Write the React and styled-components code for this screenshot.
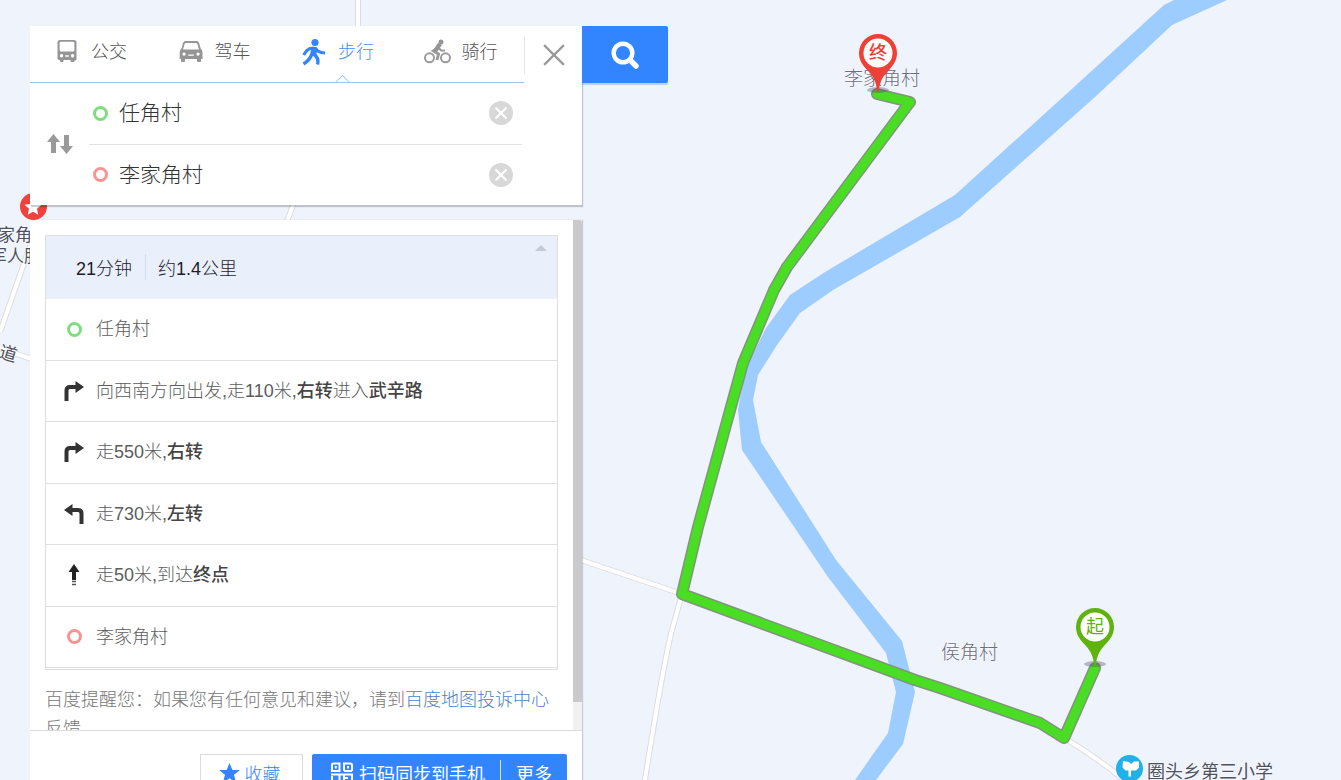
import React, { useState } from "react";
import styled, { createGlobalStyle, css } from "styled-components";

const GlobalStyle = createGlobalStyle`
  *, *::before, *::after { box-sizing: border-box; }
  body {
    margin: 0;
    background: #eff3fb;
    font-family: "Liberation Sans", "Noto Sans CJK SC", sans-serif;
    font-weight: 300;
    color: #555;
  }
  button, input {
    font: inherit;
    color: inherit;
    border: 0;
    padding: 0;
    margin: 0;
    background: none;
  }
  button { cursor: pointer; }
`;

const Page = styled.main`
  position: relative;
  height: 100vh;
  overflow: hidden;
  padding: 26px 30px 0;
  display: flex;
  flex-direction: column;
  gap: 15px;
`;

/* ---- map canvas ---- */

const MapLayer = styled.div`
  position: absolute;
  inset: 0;
  overflow: hidden;
  background: #eff3fb;
`;

const MapDrawing = styled.svg`
  display: block;
  width: 100%;
  height: 100%;
`;

const MapLabel = styled.span`
  position: absolute;
  left: ${(p) => p.$x}px;
  top: ${(p) => p.$y}px;
  font-size: ${(p) => p.$size || 19}px;
  font-weight: ${(p) => p.$weight || 300};
  line-height: 20px;
  white-space: nowrap;
  color: ${(p) => p.$color || "#686d80"};
  text-shadow: 0 0 2px #fff, 0 0 2px #fff;
  ${(p) => p.$turn && css`transform: rotate(${p.$turn}deg);`}
`;

const Pin = styled.div`
  position: absolute;
  left: ${(p) => p.$x}px;
  top: ${(p) => p.$y}px;
  width: 46px;
  height: 62px;
  svg { position: absolute; inset: 0; }
`;

const PinText = styled.span`
  position: relative;
  display: block;
  padding-top: 10px;
  text-align: center;
  font-size: 18px;
  line-height: 20px;
  font-weight: ${(p) => (p.$bold ? 500 : 400)};
  color: ${(p) => p.$color};
`;

/* ---- search card ---- */

const TopBar = styled.div`
  position: relative;
  display: flex;
  align-items: flex-start;
`;

const SearchCard = styled.form`
  width: 552px;
  background: #fff;
  box-shadow: 1px 2px 1px rgba(0, 0, 0, 0.2);
`;

const TabBar = styled.div`
  display: flex;
  height: 57px;
`;

const Tabs = styled.nav`
  flex: 1;
  display: grid;
  grid-template-columns: repeat(4, 1fr);
  border-bottom: 1px solid #a3c0dc;
`;

const Tab = styled.button`
  position: relative;
  display: flex;
  align-items: center;
  gap: 10px;
  padding: 0 0 4px 23px;
  font-size: 18px;
  line-height: 24px;
  color: ${(p) => (p.$active ? "#4a8fe0" : "#555")};
  svg { flex: none; }
`;

const TabNotch = styled.span`
  position: absolute;
  left: 60px;
  bottom: -6px;
  width: 11px;
  height: 11px;
  background: #fff;
  border: solid #a3c8e8;
  border-width: 1px 0 0 1px;
  transform: rotate(45deg);
  clip-path: polygon(-20% -20%, 110% -20%, -20% 110%);
`;

const CloseButton = styled.button`
  width: 58px;
  height: 38px;
  margin-top: 10px;
  border-left: 1px solid #e6e6e6;
  display: grid;
  place-items: center;
`;

const Fields = styled.div`
  display: flex;
`;

const SwapButton = styled.button`
  width: 59px;
  display: grid;
  place-items: center;
`;

const FieldList = styled.div`
  width: 433px;
`;

const Field = styled.div`
  display: flex;
  align-items: center;
  gap: 11px;
  height: 61px;
  padding: 0 8px 1px 4px;
  & + & { border-top: 1px solid #e3e3e3; }
`;

const Ring = styled.span`
  flex: none;
  width: 15px;
  height: 15px;
  border-radius: 50%;
  border: 3px solid ${(p) => (p.$end ? "#fb9393" : "#7fdd80")};
`;

const FieldInput = styled.input`
  flex: 1;
  min-width: 0;
  height: 40px;
  padding-bottom: 4px;
  font-size: 21px;
  color: #333;
  outline: 0;
`;

const ClearButton = styled.button`
  display: grid;
  place-items: center;
  width: 26px;
  height: 26px;
`;

const SearchButton = styled.button`
  width: 86px;
  height: 57px;
  display: grid;
  place-items: center;
  background: #3385ff;
  border-radius: 0 2px 2px 0;
  box-shadow: 0 2px 1px rgba(0, 60, 130, 0.2);
`;

/* ---- results ---- */

const Results = styled.section`
  position: relative;
  flex: 1;
  min-height: 0;
  width: 552px;
  display: flex;
  flex-direction: column;
  background: #fff;
  box-shadow: 1px 0 1px rgba(0, 0, 0, 0.16);
`;

const ScrollArea = styled.div`
  flex: 1;
  min-height: 0;
  display: flex;
`;

const ScrollContent = styled.div`
  flex: 1;
  overflow: hidden;
  padding: 15px 15px 0;
`;

const ScrollTrack = styled.div`
  width: 9px;
  background: #f1f1f2;
`;

const ScrollThumb = styled.div`
  height: calc(100% - 28px);
  background: #cacacc;
  border-top-right-radius: 3px;
`;

const RouteBox = styled.div`
  border: 1px solid #dfdfdf;
`;

const Summary = styled.div`
  display: flex;
  align-items: center;
  height: 63px;
  padding: 0 10px 2px 30px;
  background: #eaf0fb;
  font-size: 18px;
  color: #1c1c2c;
`;

const Distance = styled.span`
  flex: 1;
  margin-left: 13px;
  padding-left: 12px;
  border-left: 1px solid #d5dceb;
`;

const Collapse = styled.button`
  align-self: flex-start;
  margin-top: 9px;
  width: 12px;
  height: 6px;
  background: #c6cad6;
  clip-path: polygon(50% 0, 100% 100%, 0 100%);
`;

const Steps = styled.ol`
  list-style: none;
  margin: 0 0 1px;
  padding: 0;
  display: grid;
  grid-template-rows: repeat(6, 1fr);
  height: 369px;
`;

const Step = styled.li`
  display: grid;
  grid-template-columns: 34px 1fr;
  align-items: center;
  padding-left: 16px;
  border-bottom: 1px solid #dfdfdf;
  font-size: 18px;
  line-height: 24px;
  color: #5c5c5c;
  b { font-weight: 500; color: #444; }
`;

const StepIcon = styled.span`
  display: grid;
  place-items: center;
  width: 24px;
`;

const Notice = styled.p`
  margin: 16px 0 0;
  font-size: 18px;
  line-height: 29px;
  color: #777;
  a { color: #4c7fc4; text-decoration: none; }
`;

const Footer = styled.footer`
  flex: 0 0 50px;
  min-height: 0;
  height: 50px;
  display: flex;
  align-items: flex-start;
  justify-content: flex-end;
  gap: 9px;
  padding: 23px 15px 0;
  border-top: 1px solid #dcdcdc;
  font-size: 18px;
`;

const FavButton = styled.button`
  display: flex;
  align-items: center;
  justify-content: center;
  gap: 5px;
  flex: none;
  width: 103px;
  height: 38px;
  padding-right: 4px;
  border: 1px solid #dcdcdc;
  color: #3385ff;
`;

const ShareGroup = styled.div`
  display: flex;
  align-items: center;
  flex: none;
  width: 255px;
  height: 38px;
  background: #3385ff;
  border-radius: 2px;
  color: #fff;
`;

const ShareButton = styled.button`
  display: flex;
  align-items: center;
  gap: 5px;
  height: 26px;
  padding: 0 15px 0 18px;
  font-weight: 400;
  white-space: nowrap;
  border-right: 1px solid #d0e2ff;
`;

const MoreButton = styled.button`
  flex: 1;
  height: 38px;
  font-weight: 400;
`;

/* ---- icons ---- */

const BusIcon = () => (
  <svg width="28" height="26" viewBox="0 0 28 26" aria-hidden="true">
    <path fill="#959595" fillRule="evenodd" d="M7 1h14q2.500 0 2.500 2.500V20q0 1.500-1.500 1.500h-.5V22q0 1-1 1h-2q-1 0-1-1v-1h-7v1q0 1-1 1H8q-1 0-1-1v-1q-2.500 0-2.500-1.500V3.500Q4.500 1 7 1zM8 2.800Q6.600 2.800 6.600 4v7q0 1.500 1.400 1.500h12q1.400 0 1.400-1.500V4q0-1.200-1.400-1.200zM8.500 15a1.700 1.700 0 1 0 .1 0zm3.800 1.300v1.500h3.500v-1.500zM19.500 15a1.700 1.700 0 1 0 .1 0z" />
  </svg>
);

const CarIcon = () => (
  <svg width="28" height="26" viewBox="0 0 28 26" aria-hidden="true">
    <path fill="#959595" fillRule="evenodd" d="M8.500 2h11q2 0 2.600 2l1.600 5.500q1.800 1.600 1.800 3.500V20h-1.500v2q0 1-1 1h-2q-1 0-1-1v-2H8v2q0 1-1 1H5q-1 0-1-1v-2H2.700v-7q0-2 1.800-3.500L6 4q.6-2 2.500-2zm.2 2Q7.900 4 7.600 5L6 10.500h16L20.400 5q-.3-1-1.100-1zM7 13.500a1.600 1.600 0 1 0 .1 0zm4.200 2v1.300h5.600v-1.300zM21 13.500a1.600 1.600 0 1 0 .1 0z" />
  </svg>
);

const WalkIcon = () => (
  <svg width="28" height="28" viewBox="0 0 28 28" aria-hidden="true">
    <g fill="none" stroke="#3385ff" strokeWidth="3">
      <path d="M14 10 L10 10.500 Q7 11.500 3.600 17" />
      <path d="M15.500 10 Q17 14.500 25 15" />
      <path d="M11.800 16 Q10 22 3.500 26" strokeWidth="3.400" />
      <path d="M13.500 16 Q19.500 20 17.500 26.500" strokeWidth="3.400" />
    </g>
    <path fill="#3385ff" d="M10 9h6.500l1 2-1.500 7-6-.5 1-6z" />
    <circle cx="15" cy="4.500" r="3.600" fill="#3385ff" />
  </svg>
);

const BikeIcon = () => (
  <svg width="28" height="26" viewBox="0 0 28 26" aria-hidden="true">
    <g fill="none" stroke="#9b9b9b" strokeWidth="2">
      <circle cx="5.500" cy="18.800" r="4.500" />
      <circle cx="21.500" cy="18.800" r="4.500" />
      <path d="M14 9 L9.500 12 L14.500 15 L13 21" strokeWidth="3" />
      <path d="M14 8 L17 11.500 H21" />
    </g>
    <path fill="#959595" d="M8.500 12l5.500-8 4 2-5 7z" />
    <circle cx="17" cy="3" r="2.500" fill="#959595" />
  </svg>
);

const CrossIcon = ({ size, color, weight }) => (
  <svg width={size} height={size} viewBox="0 0 20 20" aria-hidden="true">
    <path d="M1 1l18 18M19 1L1 19" stroke={color} strokeWidth={weight} />
  </svg>
);

const ClearIcon = () => (
  <svg width="24" height="24" viewBox="0 0 24 24" aria-hidden="true">
    <circle cx="12" cy="12" r="12" fill="#d8d8d8" />
    <path d="M6.500 6.500l11 11M17.500 6.500l-11 11" stroke="#fff" strokeWidth="2.200" />
  </svg>
);

const SwapIcon = () => (
  <svg width="26" height="22" viewBox="0 0 26 22" aria-hidden="true">
    <path fill="#999" d="M6.500 1L13 9H9v11H4V9H0zM17 2h5v11h4l-6.500 8L13 13h4z" />
  </svg>
);

const SearchIcon = () => (
  <svg width="30" height="30" viewBox="0 0 30 30" aria-hidden="true">
    <circle cx="13" cy="13" r="9.300" fill="none" stroke="#fff" strokeWidth="4.400" />
    <path d="M20 20l6 6" stroke="#fff" strokeWidth="5.500" strokeLinecap="round" />
  </svg>
);

const TurnIcon = ({ left }) => (
  <svg width="22" height="22" viewBox="0 0 22 22" aria-hidden="true">
    <g transform={left ? "translate(22 0) scale(-1 1)" : undefined}>
      <path d="M3.500 21V10.500Q3.500 7 7 7H14" fill="none" stroke="#333" strokeWidth="4" />
      <path d="M12.500 1l8.500 6-8.500 6z" fill="#333" />
    </g>
  </svg>
);

const StraightIcon = () => (
  <svg width="12" height="24" viewBox="0 0 12 24" aria-hidden="true">
    <path d="M6 1l5.500 8H8v8H4V9H.5z" fill="#222" />
    <path d="M4 18.500h4M4 21.500h4" stroke="#555" strokeWidth="1.500" />
  </svg>
);

const StarIcon = () => (
  <svg width="21" height="20" viewBox="0 0 21 20" aria-hidden="true">
    <path fill="#3385ff" d="M10.500 0l2.900 7H21l-6 4.800L17.200 20l-6.700-4.700L3.800 20 6 11.800 0 7h7.600z" />
  </svg>
);

const CodeIcon = () => (
  <svg width="24" height="22" viewBox="0 0 24 22" fill="none" stroke="#fff" strokeWidth="2" aria-hidden="true">
    <path d="M2 9V3q0-1.500 1.500-1.500h6V9zM14 9V1.500h6.500Q22 1.500 22 3v6M1 12.500h22M2 14v5q0 1.500 1.500 1.500h6V12M14 12v9M14 16h4M22 12v9" />
    <path d="M14 9h8M5.800 4v2.500M18 4v2.500" />
  </svg>
);

/* ---- data ---- */

const MODES = [
  { id: "bus", label: "公交", icon: <BusIcon /> },
  { id: "car", label: "驾车", icon: <CarIcon /> },
  { id: "walk", label: "步行", icon: <WalkIcon /> },
  { id: "bike", label: "骑行", icon: <BikeIcon /> },
];

const STEPS = [
  { icon: <Ring />, text: "任角村" },
  { icon: <TurnIcon />, text: <>向西南方向出发,走110米,<b>右转</b>进入<b>武辛路</b></> },
  { icon: <TurnIcon />, text: <>走550米,<b>右转</b></> },
  { icon: <TurnIcon left />, text: <>走730米,<b>左转</b></> },
  { icon: <StraightIcon />, text: <>走50米,到达<b>终点</b></> },
  { icon: <Ring $end />, text: "李家角村" },
];

const ROADS = [
  "M358 0V26Q358 90 295 200L280 240",
  "M30 246L0 332",
  "M0 348L40 362",
  "M560 553L682 594",
  "M682 594L672 630Q664 660 644 786",
  "M1064 738Q1090 753 1122 778",
];

const RIVER =
  "M1174 0L1164 5L1085 77L955 195L825 272L790 295L766 328L745 370L738 410L742 450L828 577L886 653L896 692L888 733L855 780H876L903 744L915 692L902 641L836 560L761 442L753 400L758 375L777 345L800 313L833 290L960 217L1095 97L1172 25L1227 0Z";

const ROUTE =
  "M877 94L910 102L787 267L774 290L743 363L698 527L682 594L915 680L940 688L1040 723L1064 738L1095 668";

function MapPin({ x, y, color, bold, children }) {
  return (
    <Pin $x={x} $y={y}>
      <svg width="46" height="62" viewBox="0 0 46 62" aria-hidden="true">
        <ellipse cx="23" cy="57" rx="11" ry="3" fill="#504068" opacity="0.35" />
        <path fill={color} d="M23 1a19 19 0 0 1 19 19c0 9-5.500 14-10 19-5 5.500-7.500 11-8 19h-2c-.5-8-3-13.500-8-19-4.500-5-10-10-10-19A19 19 0 0 1 23 1z" />
        <circle cx="23" cy="20" r="14.500" fill="#fff" />
      </svg>
      <PinText $color={color} $bold={bold}>{children}</PinText>
    </Pin>
  );
}

function MapView() {
  return (
    <MapLayer>
      <MapDrawing aria-hidden="true">
        <g fill="none" strokeLinejoin="round">
          {ROADS.map((d) => <path key={d} d={d} stroke="#dcdde2" strokeWidth="6" />)}
          {ROADS.map((d) => <path key={d} d={d} stroke="#fff" strokeWidth="4" />)}
        </g>
        <path d={RIVER} fill="#9dccff" />
        <g fill="none" strokeLinejoin="round" strokeLinecap="round">
          <path d={ROUTE} stroke="#80957c" strokeWidth="12" />
          <path d={ROUTE} stroke="#49de23" strokeWidth="9" />
        </g>
        <circle cx="33.500" cy="206.500" r="13.500" fill="#f0413c" />
        <path fill="#fff" d="M33 199l2.500 5 6 .7-4.500 4 1.200 6-5.200-3-5.200 3 1.200-6-4.500-4 6-.7z" />
        <circle cx="1129.500" cy="768.500" r="13.500" fill="#21b0e8" />
        <path fill="#fff" d="M1123 761l6 1 2 2 3-2.500h5v6l-3 3h-5v6h-2.500v-6h-3l-3-3z" />
      </MapDrawing>
      <MapLabel $x={844} $y={69}>李家角村</MapLabel>
      <MapLabel $x={941} $y={643}>侯角村</MapLabel>
      <MapLabel $x={1147} $y={762} $size={18} $weight={400} $color="#4c5162">圈头乡第三小学</MapLabel>
      <MapLabel $x={-2} $y={226} $size={17} $weight={400} $color="#4c5162">家角村</MapLabel>
      <MapLabel $x={-10} $y={247} $size={17} $weight={400} $color="#4c5162">军人服务</MapLabel>
      <MapLabel $x={-1} $y={344} $size={18} $weight={400} $color="#4c5162" $turn={16}>道</MapLabel>
      <MapPin x={855} y={33} color="#ee4036" bold>终</MapPin>
      <MapPin x={1072} y={607} color="#5fb30c">起</MapPin>
    </MapLayer>
  );
}

function PlaceField({ id, label, value, onChange, end }) {
  return (
    <Field>
      <Ring $end={end} />
      <FieldInput id={id} aria-label={label} value={value} onChange={(e) => onChange(e.target.value)} />
      <ClearButton type="button" aria-label="清空" onClick={() => onChange("")}>
        <ClearIcon />
      </ClearButton>
    </Field>
  );
}

export default function App() {
  const [mode, setMode] = useState("walk");
  const [from, setFrom] = useState("任角村");
  const [to, setTo] = useState("李家角村");

  const swap = () => {
    setFrom(to);
    setTo(from);
  };

  return (
    <>
      <GlobalStyle />
      <Page>
        <MapView />
        <TopBar>
          <SearchCard onSubmit={(e) => e.preventDefault()}>
            <TabBar>
              <Tabs>
                {MODES.map((m) => (
                  <Tab key={m.id} type="button" $active={m.id === mode} onClick={() => setMode(m.id)}>
                    {m.icon}
                    {m.label}
                    {m.id === mode && <TabNotch />}
                  </Tab>
                ))}
              </Tabs>
              <CloseButton type="button" aria-label="关闭">
                <CrossIcon size={22} color="#999" weight={2} />
              </CloseButton>
            </TabBar>
            <Fields>
              <SwapButton type="button" aria-label="交换" onClick={swap}>
                <SwapIcon />
              </SwapButton>
              <FieldList>
                <PlaceField id="from" label="起点" value={from} onChange={setFrom} />
                <PlaceField id="to" label="终点" value={to} onChange={setTo} end />
              </FieldList>
            </Fields>
          </SearchCard>
          <SearchButton type="button" aria-label="搜索">
            <SearchIcon />
          </SearchButton>
        </TopBar>

        <Results>
          <ScrollArea>
            <ScrollContent>
              <RouteBox>
                <Summary>
                  <span>21分钟</span>
                  <Distance>约1.4公里</Distance>
                  <Collapse type="button" aria-label="收起" />
                </Summary>
                <Steps>
                  {STEPS.map((s, i) => (
                    <Step key={i}>
                      <StepIcon>{s.icon}</StepIcon>
                      <span>{s.text}</span>
                    </Step>
                  ))}
                </Steps>
              </RouteBox>
              <Notice>
                百度提醒您：如果您有任何意见和建议，请到<a href="#feedback">百度地图投诉中心</a>反馈
              </Notice>
            </ScrollContent>
            <ScrollTrack>
              <ScrollThumb />
            </ScrollTrack>
          </ScrollArea>
          <Footer>
            <FavButton type="button">
              <StarIcon />
              收藏
            </FavButton>
            <ShareGroup>
              <ShareButton type="button">
                <CodeIcon />
                扫码同步到手机
              </ShareButton>
              <MoreButton type="button">更多</MoreButton>
            </ShareGroup>
          </Footer>
        </Results>
      </Page>
    </>
  );
}
